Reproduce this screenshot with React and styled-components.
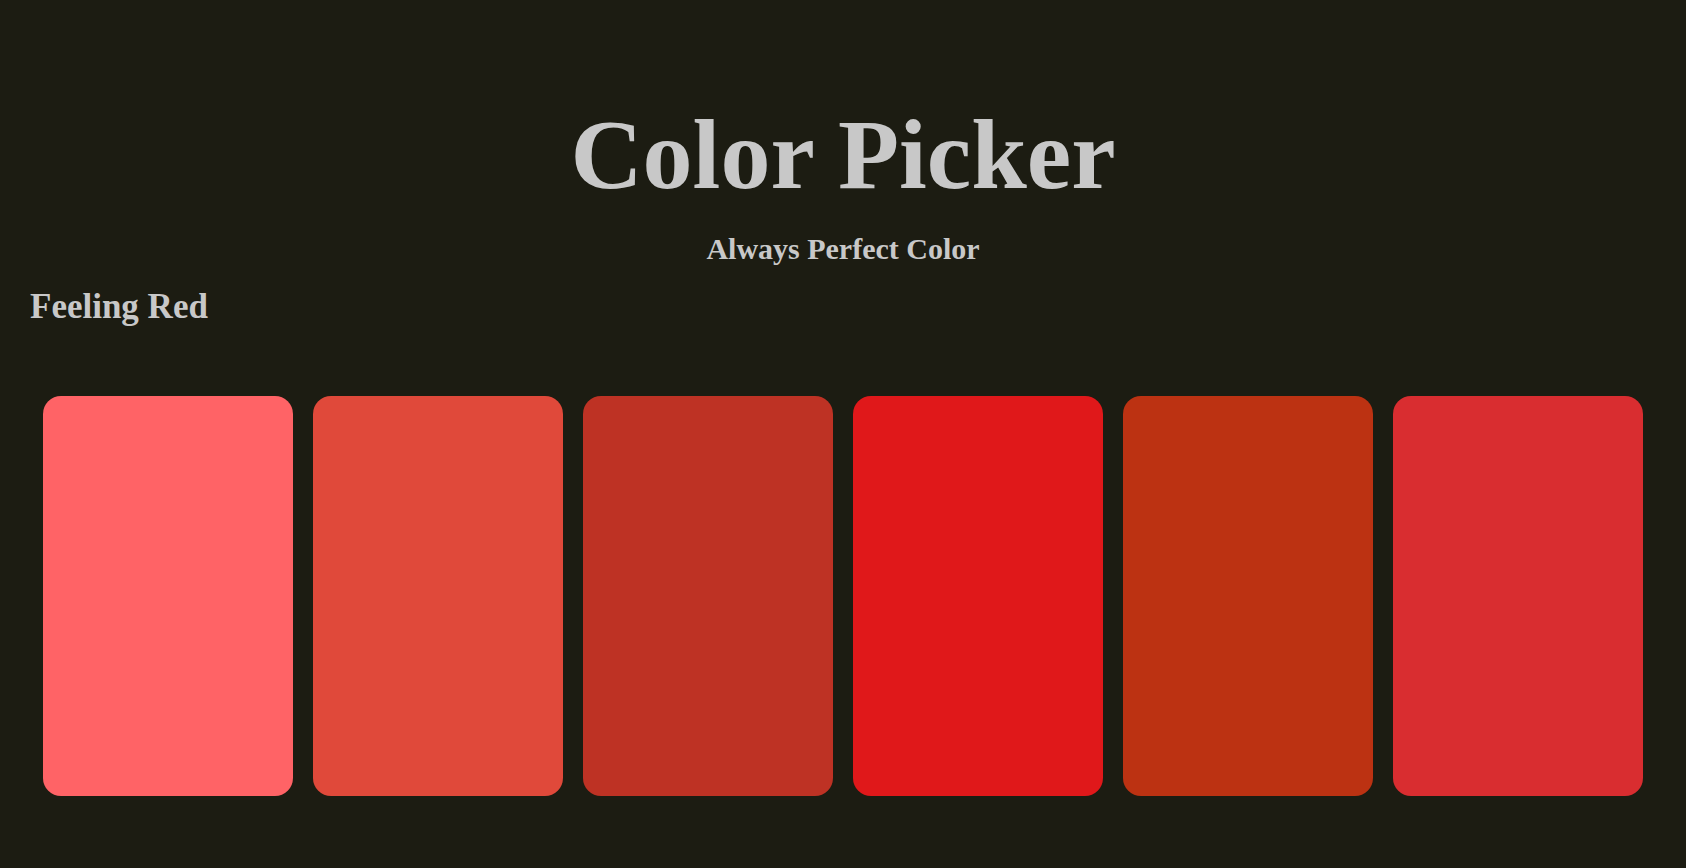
import React from 'react';
import styled, { createGlobalStyle } from 'styled-components';

const palette = ['#ff6366', '#e0493a', '#be3224', '#e0181a', '#bc3212', '#d92d30'];

function App() {
  return (
    <Page>
      <GlobalStyle />
      <Header>
        <Title>Color Picker</Title>
        <Subtitle>Always Perfect Color</Subtitle>
      </Header>
      <Mood>Feeling Red</Mood>
      <Swatches>
        {palette.map((color, index) => (
          <Swatch key={index} color={color} />
        ))}
      </Swatches>
    </Page>
  );
}

export default App;

const GlobalStyle = createGlobalStyle`
  html, body {
    margin: 0;
    background: #1c1c12;
  }
  body {
    font-family: "Liberation Serif", "Times New Roman", serif;
    color: #c8c8c8;
  }
`;

const Page = styled.div`
  min-height: 868px;
  padding-top: 97px;
  box-sizing: border-box;
`;

const Header = styled.header`
  display: flex;
  flex-direction: column;
  align-items: center;
  gap: 20px;
`;

const Title = styled.h1`
  margin: 0;
  font-size: 100px;
  font-weight: bold;
  line-height: normal;
`;

const Subtitle = styled.h3`
  margin: 0;
  font-size: 30px;
  font-weight: bold;
  line-height: normal;
`;

const Mood = styled.h2`
  margin: 21px 0 0 30px;
  font-size: 35px;
  font-weight: bold;
  line-height: normal;
`;

const Swatches = styled.div`
  display: flex;
  justify-content: center;
  gap: 20px;
  margin-top: 69px;
`;

const Swatch = styled.div`
  width: 250px;
  height: 400px;
  border-radius: 18px;
  background: ${props => props.color};
`;
